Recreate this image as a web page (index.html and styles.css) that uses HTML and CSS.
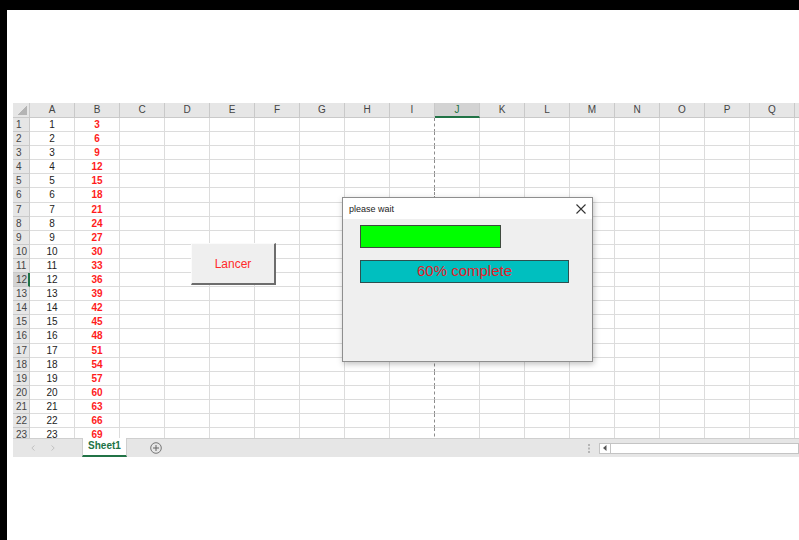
FILE: index.html
```html
<!DOCTYPE html>
<html lang="fr">
<head>
  <meta charset="UTF-8">
  <title>Barre de progression</title>
  <link rel="stylesheet" href="styles.css">
</head>
<body>
  <div class="frame">
    <!-- Feuille de calcul -->
    <div class="sheet">
      <div class="grid" id="grid"></div>

      <!-- Barre des onglets -->
      <div class="tabbar">
        <div class="tab-nav">
          <svg width="4" height="6" viewBox="0 0 4 6"><path d="M3.5 0.5 L0.8 3 L3.5 5.5" stroke="#c2c2c2" fill="none"/></svg>
          <svg width="4" height="6" viewBox="0 0 4 6"><path d="M0.5 0.5 L3.2 3 L0.5 5.5" stroke="#c2c2c2" fill="none"/></svg>
        </div>
        <div class="tab">Sheet1</div>
        <svg class="add-sheet" width="12" height="12" viewBox="0 0 12 12">
          <circle cx="6" cy="6" r="5.3" stroke="#777" fill="none"/>
          <path d="M6 3 V9 M3 6 H9" stroke="#666" fill="none"/>
        </svg>
        <svg class="tab-split" width="2" height="9" viewBox="0 0 2 9">
          <rect x="0" y="0" width="2" height="2" fill="#b5b5b5"/>
          <rect x="0" y="3.5" width="2" height="2" fill="#b5b5b5"/>
          <rect x="0" y="7" width="2" height="2" fill="#b5b5b5"/>
        </svg>
        <div class="hscroll">
          <div class="hscroll-arrow">
            <svg width="4" height="6" viewBox="0 0 4 6"><path d="M3.5 0 L0 3 L3.5 6 Z" fill="#555"/></svg>
          </div>
        </div>
      </div>
    </div>

    <!-- Bouton de la feuille -->
    <button class="lancer">Lancer</button>

    <!-- UserForm de progression -->
    <div class="dialog">
      <div class="dialog-title">
        <span>please wait</span>
        <svg class="close" width="10" height="10" viewBox="0 0 10 10">
          <path d="M0.5 0.5 L9.5 9.5 M9.5 0.5 L0.5 9.5" stroke="#333" stroke-width="1.1" fill="none"/>
        </svg>
      </div>
      <div class="dialog-body">
        <div class="bar-green"></div>
        <div class="bar-cyan">60% complete</div>
      </div>
    </div>
  </div>

  <script>
    const cols = 'ABCDEFGHIJKLMNOPQR'.split('');
    const grid = document.getElementById('grid');
    let html = '<div class="corner"></div>';

    cols.forEach(c => {
      // la colonne R est coupée au bord de la fenêtre
      const label = c === 'R' ? '' : c;
      html += `<div class="col-head${c === 'J' ? ' selected' : ''}">${label}</div>`;
    });

    for (let r = 1; r <= 23; r++) {
      html += `<div class="row-head${r === 12 ? ' selected' : ''}">${r}</div>`;
      cols.forEach(c => {
        let cls = 'cell';
        let val = '';
        if (c === 'A') { val = r; cls += ' num'; }
        if (c === 'B') { val = r * 3; cls += ' red'; }
        if (c === 'I') cls += ' page-break';
        html += `<div class="${cls}">${val}</div>`;
      });
    }

    grid.innerHTML = html;
  </script>
</body>
</html>
```

FILE: styles.css
```css
* {
  box-sizing: border-box;
  margin: 0;
  padding: 0;
}

body {
  background: #000;
  padding: 10px 0 0 7px;
  height: 540px;
  overflow: hidden;
  font-family: 'Liberation Sans', Arial, sans-serif;
}

.frame {
  position: relative;
  background: #fff;
  height: 530px;
  padding: 93px 0 0 6px;
}

.sheet {
  width: 786px;
}

.grid {
  display: grid;
  grid-template-columns: 17px repeat(18, 45px);
  grid-template-rows: 15px;
  grid-auto-rows: 14.1px;
  height: 335px;
  overflow: hidden;
  font-size: 10px;
}

.corner, .col-head, .row-head {
  background: #e6e6e6;
  color: #444;
  border-right: 1px solid #c9c9c9;
  border-bottom: 1px solid #c9c9c9;
  line-height: 13px;
}

.corner {
  position: relative;
}

.corner::after {
  content: "";
  position: absolute;
  right: 2px;
  bottom: 2px;
  width: 9px;
  height: 9px;
  background: linear-gradient(135deg, transparent 50%, #b4b4b4 50%);
}

.col-head {
  text-align: center;
}

.col-head.selected {
  background: #d3d3d3;
  color: #217346;
  border-bottom: 2px solid #217346;
}

.row-head {
  padding-left: 3px;
}

.row-head.selected {
  background: #d3d3d3;
  border-right: 2px solid #217346;
}

.cell {
  border-right: 1px solid #dcdcdc;
  border-bottom: 1px solid #dcdcdc;
  text-align: center;
  line-height: 14px;
  color: #222;
}

.cell.red {
  color: #ff1c1c;
  font-weight: bold;
}

.cell.page-break {
  border-right: 1px dashed #8c8c8c;
}

/* onglets */
.tabbar {
  display: flex;
  align-items: center;
  height: 19px;
  background: #e6e6e6;
  border-top: 1px solid #cfcfcf;
  font-size: 10px;
}

.tab-nav {
  display: flex;
  align-items: center;
  gap: 16px;
  width: 69px;
  padding-left: 18px;
}

.tab {
  align-self: stretch;
  width: 45px;
  background: #fff;
  color: #217346;
  font-weight: bold;
  text-align: center;
  line-height: 16px;
  border-bottom: 2px solid #217346;
  border-left: 1px solid #cfcfcf;
  border-right: 1px solid #cfcfcf;
  margin-top: -1px;
}

.add-sheet {
  margin-left: 23px;
}

.tab-split {
  margin-left: auto;
  margin-right: 9px;
}

.hscroll {
  width: 200px;
  height: 11px;
  background: #fff;
  border: 1px solid #c4c4c4;
}

.hscroll-arrow {
  display: flex;
  align-items: center;
  justify-content: center;
  width: 11px;
  height: 9px;
  border-right: 1px solid #c4c4c4;
}

/* bouton */
.lancer {
  position: absolute;
  left: 184px;
  top: 233px;
  width: 85px;
  height: 42px;
  background: #efefef;
  border: 1px solid #fbfbfb;
  border-right: 2px solid #6d6d6d;
  border-bottom: 2px solid #6d6d6d;
  color: #ff2a2a;
  font-family: 'Liberation Sans', Arial, sans-serif;
  font-size: 12px;
}

/* fenêtre */
.dialog {
  position: absolute;
  left: 335px;
  top: 187px;
  width: 251px;
  height: 165px;
  background: #efefef;
  border: 1px solid #8e8e8e;
  box-shadow: 1px 2px 6px rgba(0, 0, 0, 0.25);
}

.dialog-title {
  display: flex;
  justify-content: space-between;
  align-items: center;
  height: 21px;
  padding: 0 6px;
  background: #fff;
  font-size: 9px;
  color: #222;
}

.dialog-body {
  display: flex;
  flex-direction: column;
  align-items: flex-start;
  gap: 12px;
  padding: 6px 17px;
}

.bar-green {
  width: 141px;
  height: 23px;
  background: #00ff00;
  border: 1px solid #3f4a3f;
}

.bar-cyan {
  width: 209px;
  height: 23px;
  background: #00bfbf;
  border: 1px solid #2c5050;
  color: #e4202a;
  font-size: 15px;
  line-height: 19px;
  text-align: center;
}
```
